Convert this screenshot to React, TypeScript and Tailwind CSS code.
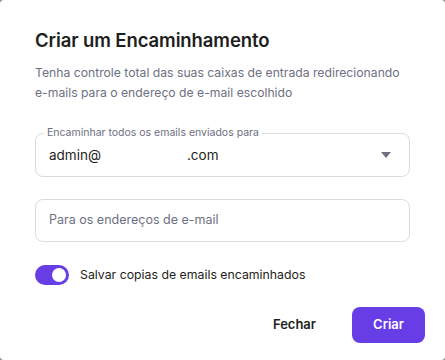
export default function App() {
  return (
    <div className="w-[445px] h-[360px] bg-[#8c8c8c]" style={{ fontFamily: 'Inter, "Noto Sans", sans-serif' }}>
      <div className="w-full h-full bg-white rounded-[4px] flex flex-col">
        <div className="px-[35px] pt-[28px]">
          <h2 className="text-[18.5px] leading-[24px] font-semibold text-[#1d1e20] tracking-[-0.1px]">Criar um Encaminhamento</h2>
          <p className="mt-[11px] text-[12.2px] leading-[20px] text-[#6d7081]">
            Tenha controle total das suas caixas de entrada redirecionando e-mails para o endereço de e-mail escolhido
          </p>

          <div className="relative mt-[30px] h-[44px] rounded-lg border border-[#dadce0] flex items-center px-[13px]">
            <span className="absolute -top-[8px] left-[8px] bg-white px-[3px] text-[10.5px] leading-[14px] text-[#6d7081]">
              Encaminhar todos os emails enviados para
            </span>
            <span className="text-[13.5px] text-[#1d1e20]">admin@</span>
            <span className="inline-block w-[86px]" />
            <span className="text-[13.5px] text-[#1d1e20]">.com</span>
            <svg className="ml-auto mr-[5px]" width="10" height="6" viewBox="0 0 10 6">
              <path d="M0 0 L10 0 L5 6 Z" fill="#6d7081" />
            </svg>
          </div>

          <div className="mt-[22px] h-[43px] rounded-lg border border-[#dadce0] flex items-center px-[13px]">
            <span className="text-[12.5px] text-[#6d7081]">Para os endereços de e-mail</span>
          </div>

          <div className="mt-[23px] flex items-center gap-[11px]">
            <div className="w-[34px] h-[20px] rounded-full bg-[#673de6] flex items-center justify-end pr-[3px]">
              <div className="w-[14px] h-[14px] rounded-full bg-white" />
            </div>
            <span className="text-[12.3px] text-[#1d1e20]">Salvar copias de emails encaminhados</span>
          </div>
        </div>

        <div className="mt-[22px] pr-[20px] flex items-center justify-end gap-[16px]">
          <button className="px-[20px] h-[36px] text-[13px] font-semibold text-[#1d1e20]">Fechar</button>
          <button className="w-[73px] h-[36px] rounded-lg bg-[#673de6] text-white text-[13px] font-semibold">Criar</button>
        </div>
      </div>
    </div>
  )
}
